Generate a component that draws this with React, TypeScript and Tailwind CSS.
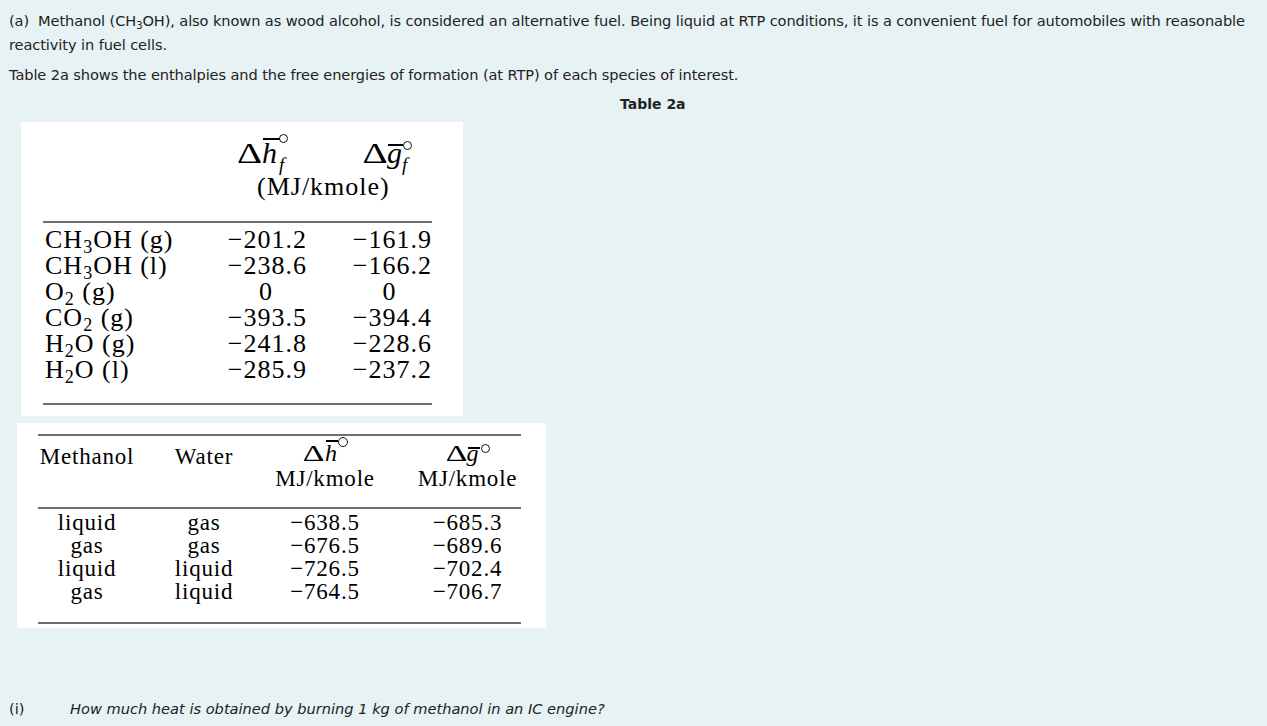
import React from "react";

const serif = { fontFamily: '"Liberation Serif", "Times New Roman", serif' };

type DeltaProps = {
  letter: string;
  sub?: string;
  box: string; // font size + line height of the symbol
  delta: string; // width/scale of the Δ
  letterW: string;
  bar: string; // bar position
  circle: string; // circle position + size
  subPos?: string;
  spacer: string;
};

// Δ with a barred italic letter, a degree circle on top and an optional subscript
const Delta = (p: DeltaProps) => (
  <span className={`inline-flex tracking-normal ${p.box}`}>
    <span className={`inline-block text-center ${p.delta}`}>Δ</span>
    <span className={`relative inline-block italic ${p.letterW}`}>
      {p.letter}
      <span className={`absolute h-[1.5px] bg-black ${p.bar}`} />
    </span>
    <span className={`relative inline-block ${p.spacer}`}>
      <span className={`absolute rounded-full border-[1.5px] border-[#111] ${p.circle}`} />
      {p.sub && <span className={`absolute italic leading-none ${p.subPos}`}>{p.sub}</span>}
    </span>
  </span>
);

const Sub = ({ n }: { n: string }) => (
  <span className="relative top-[5px] text-[18px] leading-none">{n}</span>
);

const rows1 = [
  { name: <>CH<Sub n="3" />OH (g)</>, h: "−201.2", g: "−161.9" },
  { name: <>CH<Sub n="3" />OH (l)</>, h: "−238.6", g: "−166.2" },
  { name: <>O<Sub n="2" /> (g)</>, h: "0", g: "0" },
  { name: <>CO<Sub n="2" /> (g)</>, h: "−393.5", g: "−394.4" },
  { name: <>H<Sub n="2" />O (g)</>, h: "−241.8", g: "−228.6" },
  { name: <>H<Sub n="2" />O (l)</>, h: "−285.9", g: "−237.2" },
];

const rows2 = [
  ["liquid", "gas", "−638.5", "−685.3"],
  ["gas", "gas", "−676.5", "−689.6"],
  ["liquid", "liquid", "−726.5", "−702.4"],
  ["gas", "liquid", "−764.5", "−706.7"],
];

export default function App() {
  return (
    <div
      className="min-h-[726px] bg-[#e7f2f5] text-[#222] px-[9px] pt-[9px]"
      style={{ fontFamily: '"DejaVu Sans", "Open Sans", sans-serif' }}
    >
      <p className="text-[14.6px] leading-[24px] tracking-[-0.1px]">
        (a)&nbsp; Methanol (CH<sub className="text-[10px]">3</sub>OH), also known as wood alcohol, is considered an alternative fuel. Being liquid at RTP conditions, it is a convenient fuel for automobiles with reasonable
        <br />
        reactivity in fuel cells.
      </p>
      <p className="text-[14.6px] leading-[24px] tracking-[-0.1px] mt-[6px]">
        Table 2a shows the enthalpies and the free energies of formation (at RTP) of each species of interest.
      </p>
      <p className="text-[14px] leading-[24px] font-bold pl-[611px] mt-[5px]">Table 2a</p>

      {/* Table 1: formation values */}
      <div className="ml-[12px] mt-[6px] w-[442px] h-[294px] bg-white pl-[22px] pt-[12px] text-black text-[26px] tracking-[1px]" style={serif}>
        <div className="w-[389px]">
          <div className="flex pt-[4px] pl-[194px]">
            <Delta
              letter="h"
              sub="f"
              box="text-[30px] leading-[30px] h-[30px]"
              delta="w-[25px] scale-x-[1.3]"
              letterW="w-[17px]"
              bar="top-0 left-[1px] w-[17px]"
              circle="top-[-4px] left-0 w-[9px] h-[9px]"
              subPos="top-[17px] left-0 text-[19px]"
              spacer="w-[12px]"
            />
            <span className="w-[72px]" />
            <Delta
              letter="g"
              sub="f"
              box="text-[30px] leading-[30px] h-[30px]"
              delta="w-[24px] scale-x-[1.3]"
              letterW="w-[15px]"
              bar="top-[6px] left-[1px] w-[15px]"
              circle="top-[3px] left-[1px] w-[9px] h-[9px]"
              subPos="top-[17px] left-0 text-[19px]"
              spacer="w-[12px]"
            />
          </div>
          <div className="pl-[214px] leading-[26px] mt-[6px]">(MJ/kmole)</div>
          <div className="h-[2px] bg-[#6f6f6f] mt-[21px]" />
          <div className="mt-[4px] grid grid-cols-[180px_84px_125px] leading-[26px]">
            {rows1.map((r, i) => (
              <React.Fragment key={i}>
                <span className="pl-[2px]">{r.name}</span>
                <span className={r.h === "0" ? "text-center pl-[2px]" : "text-right"}>{r.h}</span>
                <span className={r.g === "0" ? "text-center pl-[40px]" : "text-right"}>{r.g}</span>
              </React.Fragment>
            ))}
          </div>
          <div className="h-[2px] bg-[#6f6f6f] mt-[20px]" />
        </div>
      </div>

      {/* Table 2: reaction values */}
      <div className="ml-[8px] mt-[7px] w-[529px] h-[205px] bg-white pl-[21px] pt-[11px] text-black text-[23px] tracking-[0.8px]" style={serif}>
        <div className="w-[483px]">
          <div className="h-[2px] bg-[#6f6f6f]" />
          <div className="grid grid-cols-[98px_136px_142px_107px] leading-[23px]">
            <span className="pt-[9px] text-center">Methanol</span>
            <span className="pt-[9px] text-center">Water</span>
            <span className="pr-[36px] pt-[3px] text-center">
              <span className="flex justify-center">
                <Delta
                  letter="h"
                  box="text-[24px] leading-[28px] h-[28px]"
                  delta="w-[23px] scale-x-[1.4]"
                  letterW="w-[12px]"
                  bar="top-[1px] left-[1px] w-[12px]"
                  circle="top-[-2px] left-[1px] w-[10px] h-[10px]"
                  spacer="w-[11px]"
                />
              </span>
              <span className="block">MJ/kmole</span>
            </span>
            <span className="pt-[3px] text-center">
              <span className="flex justify-center">
                <Delta
                  letter="g"
                  box="text-[24px] leading-[28px] h-[28px]"
                  delta="w-[21px] scale-x-[1.4]"
                  letterW="w-[12px]"
                  bar="top-[8px] left-[1px] w-[12px]"
                  circle="top-[5px] left-[2px] w-[9px] h-[9px]"
                  spacer="w-[11px]"
                />
              </span>
              <span className="block">MJ/kmole</span>
            </span>
          </div>
          <div className="h-[2px] bg-[#6f6f6f] mt-[17px]" />
          <div className="mt-[2px] grid grid-cols-[98px_136px_142px_107px] leading-[23px]">
            {rows2.map((r, i) => (
              <React.Fragment key={i}>
                <span className="text-center">{r[0]}</span>
                <span className="text-center">{r[1]}</span>
                <span className="text-center pr-[36px]">{r[2]}</span>
                <span className="text-center">{r[3]}</span>
              </React.Fragment>
            ))}
          </div>
          <div className="h-[2px] bg-[#6f6f6f] mt-[19px]" />
        </div>
      </div>

      <div className="mt-[69px] flex text-[14.6px] leading-[24px]">
        <span className="w-[61px]">(i)</span>
        <span className="italic">How much heat is obtained by burning 1 kg of methanol in an IC engine?</span>
      </div>
    </div>
  );
}
